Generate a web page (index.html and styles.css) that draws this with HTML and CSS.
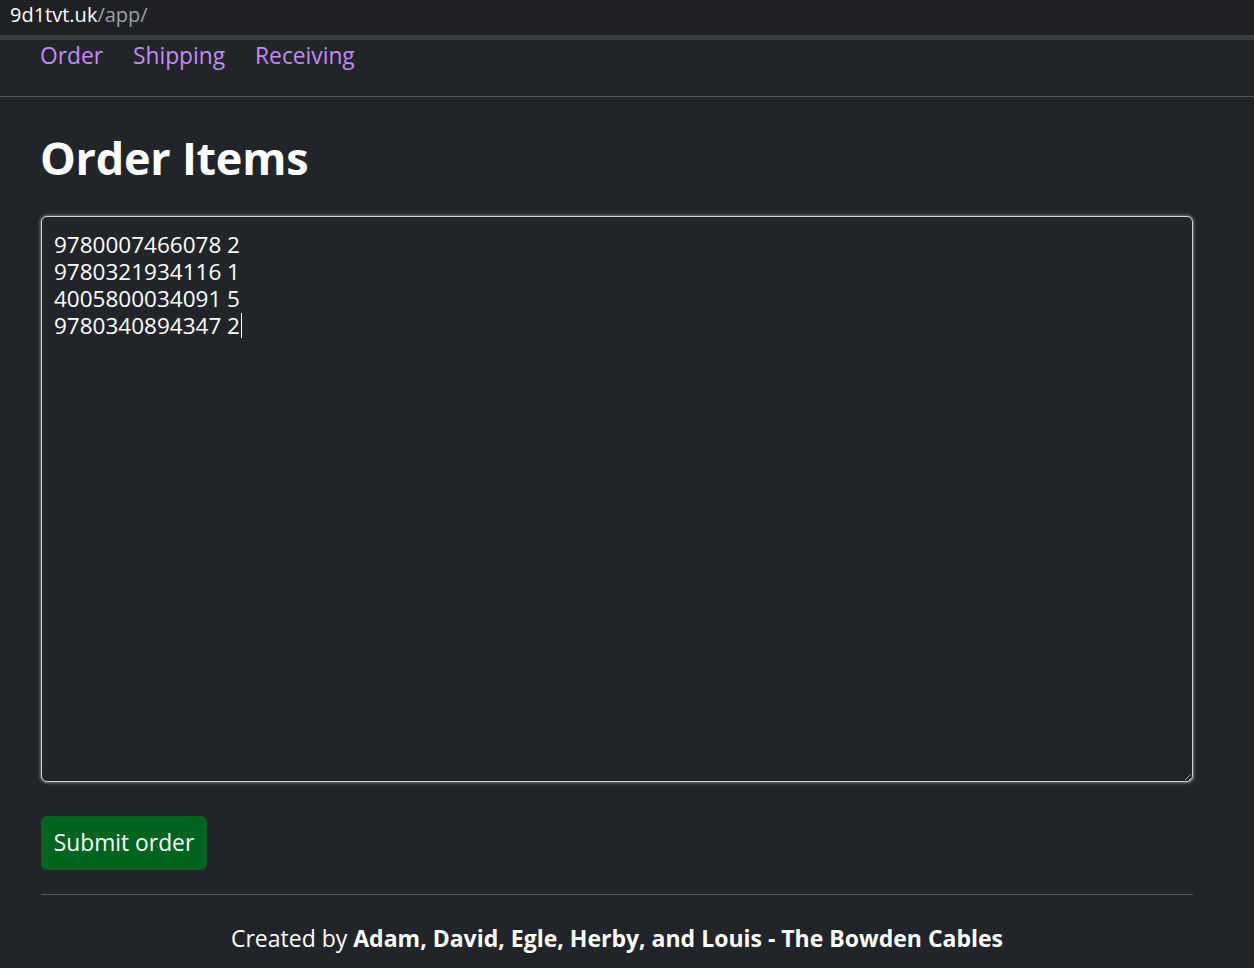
FILE: index.html
```html
<!DOCTYPE html>
<html lang="en">
<head>
<meta charset="utf-8">
<title>Order Items</title>
<link rel="stylesheet" href="styles.css">
</head>
<body>
<div class="urlbar"><span class="host">9d1tvt.uk</span><span class="path">/app/</span></div>
<div class="stripe"></div>
<nav class="nav">
  <a class="nav-link" href="#">Order</a>
  <a class="nav-link" href="#">Shipping</a>
  <a class="nav-link" href="#">Receiving</a>
</nav>
<main class="container">
  <h1 class="title">Order Items</h1>
  <div class="field">
    <textarea class="items" spellcheck="false">9780007466078 2
9780321934116 1
4005800034091 5
9780340894347 2</textarea>
    <span class="caret"></span>
  </div>
  <div class="actions">
    <button class="btn-submit" type="button">Submit order</button>
  </div>
  <hr class="rule">
  <footer class="footer">Created by <strong>Adam, David, Egle, Herby, and Louis - The Bowden Cables</strong></footer>
</main>
</body>
</html>
```
FILE: styles.css
```css
html, body {
  margin: 0;
  padding: 0;
}
body {
  background: #212529;
  color: #ffffff;
  font-family: "Open Sans", "Noto Sans", sans-serif;
  color-scheme: dark;
}
.urlbar {
  height: 35px;
  background: #1f2023;
  box-sizing: border-box;
  padding-left: 10px;
  font-size: 20px;
  line-height: 30px;
}
.host { color: #ffffff; }
.path { color: #9aa0a6; }
.stripe {
  height: 5px;
  background: #3b3c3e;
}
.nav {
  height: 57px;
  box-sizing: border-box;
  border-bottom: 1px solid #55585c;
  display: flex;
  align-items: flex-start;
  gap: 30px;
  padding: 1px 0 0 40px;
}
.nav-link {
  color: #c58af9;
  text-decoration: none;
  font-size: 22.75px;
  line-height: 30px;
}
.container {
  width: 1152px;
  margin-left: 41px;
  display: flex;
  flex-direction: column;
}
.title {
  margin: 34px 0 0 -1px;
  font-size: 45px;
  line-height: 54px;
  font-weight: 700;
  letter-spacing: -0.25px;
}
.field {
  position: relative;
  margin-top: 31px;
}
.items {
  display: block;
  width: 100%;
  height: 566px;
  box-sizing: border-box;
  margin: 0;
  padding: 14px 12px;
  background: #212529;
  color: #ffffff;
  border: 1px solid #d4d4d4;
  border-radius: 6px;
  box-shadow: 0 0 3px 1px rgba(190, 190, 190, 0.55);
  font-family: "Open Sans", "Noto Sans", sans-serif;
  font-size: 22.5px;
  line-height: 27px;
  outline: none;
  resize: vertical;
}
.caret {
  position: absolute;
  left: 200px;
  top: 97px;
  width: 1px;
  height: 25px;
  background: #ffffff;
}
.actions {
  margin-top: 34px;
  display: flex;
}
.btn-submit {
  height: 54px;
  width: 166px;
  padding: 0;
  border: none;
  border-radius: 6px;
  background: #00641f;
  color: #ffffff;
  font-family: "Open Sans", "Noto Sans", sans-serif;
  font-size: 22.8px;
  line-height: 30px;
}
.rule {
  margin: 24px 0 0 0;
  border: none;
  border-top: 1px solid #5a5d61;
  height: 0;
}
.footer {
  margin-top: 28px;
  text-align: center;
  font-size: 23px;
  line-height: 30px;
}
.footer strong {
  font-weight: 700;
}
```
